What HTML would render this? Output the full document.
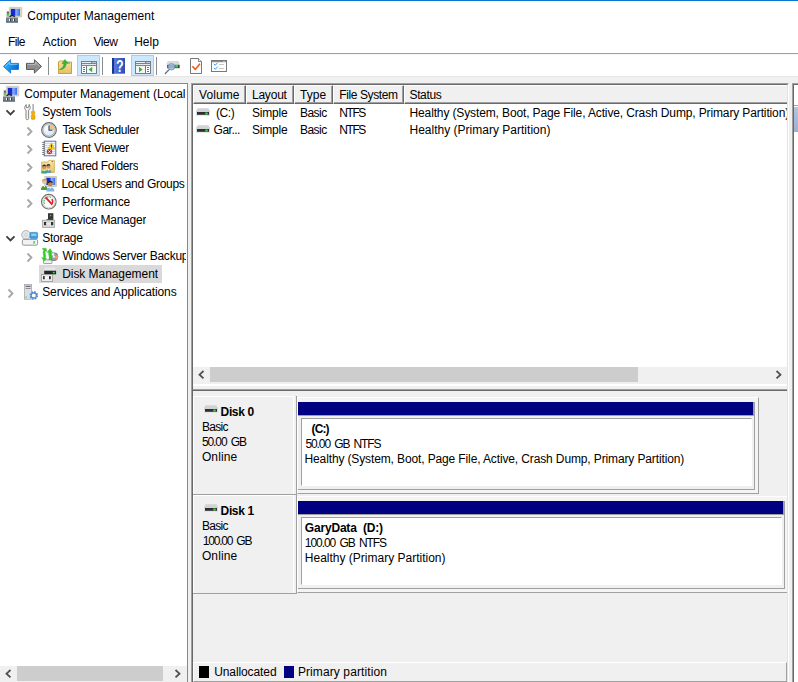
<!DOCTYPE html>
<html>
<head>
<meta charset="utf-8">
<title>Computer Management</title>
<style>
html,body{margin:0;padding:0;}
body{width:798px;height:682px;overflow:hidden;background:#fff;position:relative;
  font-family:"Liberation Sans",sans-serif;font-size:12px;color:#000;}
.a{position:absolute;}
.t{position:absolute;white-space:nowrap;line-height:18px;height:18px;}
.b{font-weight:bold;}
svg{position:absolute;overflow:visible;}
/* section: frame */
#accent{left:0;top:0;width:798px;height:1px;background:#0c76d2;}
#menuline{left:0;top:53px;width:798px;height:1px;background:#a0a0a0;}
#band{left:0;top:76px;width:798px;height:606px;background:#f0f0f0;}
/* tree pane */
#tree{left:0;top:83px;width:187px;height:599px;background:#fff;border-top:1px solid #828790;border-right:1px solid #828790;box-sizing:content-box;overflow:hidden;}
#tree .t{overflow:hidden;}
#sel{left:39px;top:181px;width:123px;height:18px;background:#d9d9d9;}
/* right pane */
#rp{left:191px;top:83px;width:596px;height:599px;border-left:1px solid #a0a0a0;border-top:1px solid #a0a0a0;border-right:1px solid #fff;overflow:hidden;}
#rpi{left:0;top:0;width:594px;height:598px;border-left:1px solid #696969;border-top:1px solid #696969;border-right:1px solid #e3e3e3;overflow:hidden;background:#f0f0f0;}
#list{left:0;top:0;width:594px;height:299px;background:#fff;overflow:hidden;}
#hdr{left:0;top:0;width:594px;height:19px;background:#f0f0f0;}
.hc{position:absolute;top:0;height:19px;box-sizing:border-box;border-left:1px solid #fff;border-top:1px solid #fff;border-right:1px solid #696969;border-bottom:1px solid #696969;box-shadow:inset -1px -1px 0 #a0a0a0;}
#hsb{left:0;top:282px;width:594px;height:17px;background:#f0f0f0;}
#hthumb{left:17px;top:0;width:428px;height:15px;background:#cdcdcd;}
#split{left:0;top:299px;width:594px;height:5px;background:#f0f0f0;border-top:1px solid #fff;box-shadow:inset 0 1px 0 #fff;box-sizing:border-box;}
#split2{left:0;top:304px;width:594px;height:2px;background:#696969;border-top:1px solid #a0a0a0;box-sizing:border-box;}
#gv{left:-1px;top:305px;width:596px;height:293px;}
.d{line-height:15px;height:15px;}
.lab{box-sizing:border-box;width:101px;height:99px;border-top:1px solid #fff;border-left:1px solid #fff;border-right:1px solid #fff;}
.lab:after{content:"";position:absolute;left:-1px;top:97px;width:104px;height:1px;background:#a0a0a0;}
.vsep{width:1px;height:99px;background:#a0a0a0;}
.pout{height:97px;box-sizing:border-box;border-top:1px solid #fff;border-left:1px solid #fff;border-right:1px solid #a0a0a0;border-bottom:1px solid #a0a0a0;background:#f4f4f4;}
.pmid{height:88px;box-sizing:border-box;border-right:1px solid #a0a0a0;border-bottom:1px solid #a0a0a0;background:#f0f0f0;}
.pbar{left:0;top:0;height:13px;background:#000080;border-bottom:1px solid #a0a0a0;border-right:1px solid #a0a0a0;}
.pin{height:68px;box-sizing:border-box;border-top:1px solid #a0a0a0;border-left:1px solid #a0a0a0;border-right:1px solid #fff;border-bottom:1px solid #fff;background:#fff;}
#legend{left:1px;top:272px;width:592px;height:18px;border-top:1px solid #fff;border-left:1px solid #fff;border-right:1px solid #a0a0a0;border-bottom:1px solid #a0a0a0;}
</style>
</head>
<body>
<div class="a" id="accent"></div>
<div class="t" id="title" style="left:27.21px;top:7px;letter-spacing:0.056px;">Computer Management</div>
<div class="t" style="left:8.1px;top:33px;letter-spacing:-0.668px;">File</div>
<div class="t" style="left:42.71px;top:33px;letter-spacing:0.08px;">Action</div>
<div class="t" style="left:93.41px;top:33px;letter-spacing:-0.399px;">View</div>
<div class="t" style="left:134.21px;top:33px;letter-spacing:0.0px;">Help</div>
<div class="a" id="menuline"></div>
<div class="a" id="band"></div>
<div class="a" style="left:0;top:76px;width:798px;height:1px;background:#e6e6e6;"></div>
<div class="a" style="left:0;top:54px;width:798px;height:1px;background:#f4f6fa;"></div>



<!-- shared icon symbols -->
<svg width="0" height="0" style="left:0;top:0;">
  <defs>
    <linearGradient id="gScr" x1="0" y1="0" x2="1" y2="0"><stop offset="0" stop-color="#1a22d0"/><stop offset="0.4" stop-color="#1030d8"/><stop offset="0.55" stop-color="#8cb0f8"/><stop offset="1" stop-color="#3c6cf0"/></linearGradient>
    <linearGradient id="gBox" x1="0" y1="0" x2="0" y2="1"><stop offset="0" stop-color="#a8b4bc"/><stop offset="0.25" stop-color="#6c7c88"/><stop offset="1" stop-color="#5c6c78"/></linearGradient>
    <radialGradient id="gClk" cx="0.4" cy="0.4" r="0.7"><stop offset="0" stop-color="#ffffff"/><stop offset="1" stop-color="#c8dcec"/></radialGradient>
    <linearGradient id="gFold" x1="0" y1="0" x2="0" y2="1"><stop offset="0" stop-color="#f8e4a4"/><stop offset="1" stop-color="#e8c468"/></linearGradient>
    <linearGradient id="gHd" x1="0" y1="0" x2="0" y2="1"><stop offset="0" stop-color="#e0e2e4"/><stop offset="1" stop-color="#b4b8bc"/></linearGradient>
    <g id="icCM">
      <rect x="0.6" y="4" width="2.8" height="6.4" fill="#b4b4b8"/>
      <rect x="1.2" y="5" width="1.6" height="1.6" fill="#484858"/>
      <rect x="0.8" y="7" width="2.4" height="1.6" fill="#30e030"/>
      <rect x="3.3" y="0.3" width="12.5" height="9.8" rx="0.8" fill="#d8d4c4" stroke="#bcb8a8" stroke-width="0.5"/>
      <rect x="4.8" y="1.9" width="9.2" height="6.9" fill="url(#gScr)"/>
      <path d="M3.6 10.2 C4.4 8.2 8 8.2 8.8 10.2" fill="none" stroke="#181818" stroke-width="1.2"/>
      <rect x="0" y="10.2" width="12" height="5.6" fill="url(#gBox)"/>
      <rect x="0.3" y="12.6" width="11.4" height="0.7" fill="#8c98a0"/>
      <rect x="3" y="11.8" width="1" height="2.4" fill="#f4f4f4"/><rect x="4" y="11.8" width="1" height="2.4" fill="#303840"/>
      <rect x="7" y="11.8" width="1" height="2.4" fill="#f4f4f4"/><rect x="8" y="11.8" width="1" height="2.4" fill="#303840"/>
    </g>
    <g id="icHD">
      <path d="M1.2 0.2 L12.8 0.2 L12.8 2 L14 2.2 L14 4 L0 4 L0 2.2 L1.2 2 Z" fill="#d0d2d6"/>
      <rect x="0" y="4" width="14" height="3.7" fill="#dcdee2"/>
      <rect x="1" y="4" width="12" height="2.8" fill="#2c2e30"/>
      <rect x="9.2" y="4.4" width="2.6" height="2" rx="0.6" fill="#28e438"/>
    </g>
  </defs>
</svg>
<svg style="left:6px;top:7px;" width="16" height="16" viewBox="0 0 16 16"><use href="#icCM"/></svg>
<!-- toolbar -->
<svg id="tb" style="left:0;top:54px;" width="240" height="24" viewBox="0 54 240 24">
  <defs>
    <linearGradient id="gB" x1="0" y1="0" x2="1" y2="0.5"><stop offset="0" stop-color="#48bcfc"/><stop offset="0.5" stop-color="#1c9cf0"/><stop offset="1" stop-color="#0868cc"/></linearGradient>
    <linearGradient id="gG" x1="0" y1="0" x2="0" y2="1"><stop offset="0" stop-color="#a8a8a8"/><stop offset="0.5" stop-color="#8c8c8c"/><stop offset="1" stop-color="#9c9c9c"/></linearGradient>
    <linearGradient id="gF" x1="0" y1="0" x2="0" y2="1"><stop offset="0" stop-color="#f6e3a0"/><stop offset="1" stop-color="#e4bf62"/></linearGradient>
    <linearGradient id="gH" x1="0" y1="0" x2="1" y2="0"><stop offset="0" stop-color="#5a80e4"/><stop offset="1" stop-color="#2c4cb8"/></linearGradient>
  </defs>
  <!-- back -->
  <path d="M3.5 66.4 L10.6 59.7 L10.6 63.4 L18.5 63.4 L18.5 69.4 L10.6 69.4 L10.6 73.1 Z" fill="url(#gB)" stroke="#1c80dc" stroke-width="1" stroke-linejoin="round"/>
  <path d="M5.2 66.4 L9.6 62.2 L9.6 64.4 L17.5 64.4" fill="none" stroke="#9cdcff" stroke-width="0.8" opacity="0.85"/>
  <!-- forward -->
  <path d="M41.5 66.4 L34.4 59.7 L34.4 63.4 L26.5 63.4 L26.5 69.4 L34.4 69.4 L34.4 73.1 Z" fill="url(#gG)" stroke="#565656" stroke-width="1" stroke-linejoin="round"/>
  <path d="M39.8 66.4 L35.4 62.2 L35.4 64.4 L27.5 64.4" fill="none" stroke="#d0d0d0" stroke-width="0.8" opacity="0.8"/>
  <rect x="48" y="57" width="1" height="18" fill="#8c8c8c"/>
  <!-- up folder -->
  <path d="M58.5 62 L58.5 73.5 L71.5 73.5 L71.5 62 L66 62 L65 61 L59.5 61 Z" fill="url(#gF)" stroke="#c8a040" stroke-width="1"/>
  <rect x="67" y="62.5" width="3" height="1.2" fill="#7aa0d0"/>
  <path d="M59.5 69.5 C62.5 68.5 64 66 64 63.5 L62 63.8 L65 59.5 L68 63.2 L66.2 63.3 C66.2 67 63.5 70 59.5 69.5 Z" fill="#3cb434" stroke="#2a9a24" stroke-width="0.5"/>
  <!-- show/hide tree (active) -->
  <rect x="77.5" y="55.5" width="22" height="20" fill="#cce8ff" stroke="#99d1ff"/>
  <g>
    <rect x="81.5" y="61.5" width="15" height="12" fill="#fff" stroke="#7c7c7c"/>
    <rect x="82" y="62" width="14" height="4" fill="#7c8494"/>
    <rect x="82" y="62" width="9" height="1" fill="#eceef2"/>
    <rect x="92.5" y="62" width="1.2" height="1" fill="#eceef2"/><rect x="94.5" y="62" width="1.2" height="1" fill="#eceef2"/>
    <rect x="82" y="64" width="14" height="1" fill="#e4e6ea"/>
    <rect x="86" y="66" width="1.2" height="7" fill="#6c7c94"/>
    <rect x="87.2" y="66" width="8.8" height="7" fill="#f6f6f6"/>
    <rect x="83" y="67" width="2" height="1" fill="#3a7cd0"/><rect x="83" y="69" width="2" height="1" fill="#3a7cd0"/><rect x="83" y="71" width="2" height="1" fill="#3a7cd0"/>
    <path d="M88.6 69.5 L92.2 66.8 L92.2 72.2 Z" fill="#3cb034"/>
  </g>
  <rect x="102" y="57" width="1" height="18" fill="#8c8c8c"/>
  <!-- help -->
  <rect x="112" y="58" width="13" height="15.7" fill="url(#gH)"/>
  <rect x="112" y="58" width="2.4" height="15.7" fill="#1c3690"/>
  <rect x="114.4" y="58" width="0.8" height="15.7" fill="#7c9cf0" opacity="0.7"/>
  <text transform="translate(119.9 71.6) scale(0.78 1)" font-family="Liberation Sans, sans-serif" font-weight="bold" font-size="16" fill="#fff" text-anchor="middle">?</text>
  <!-- show/hide action pane (active) -->
  <rect x="131.5" y="55.5" width="22" height="20" fill="#cce8ff" stroke="#99d1ff"/>
  <g>
    <rect x="135.5" y="61.5" width="15" height="12" fill="#fff" stroke="#7c7c7c"/>
    <rect x="136" y="62" width="14" height="4" fill="#7c8494"/>
    <rect x="136" y="62" width="9" height="1" fill="#eceef2"/>
    <rect x="146.5" y="62" width="1.2" height="1" fill="#eceef2"/><rect x="148.5" y="62" width="1.2" height="1" fill="#eceef2"/>
    <rect x="136" y="64" width="14" height="1" fill="#e4e6ea"/>
    <rect x="144.8" y="66" width="1.2" height="7" fill="#6c7c94"/>
    <rect x="136" y="66" width="8.8" height="7" fill="#f6f6f6"/>
    <rect x="147" y="67" width="2" height="1" fill="#3a7cd0"/><rect x="147" y="69" width="2" height="1" fill="#3a7cd0"/><rect x="147" y="71" width="2" height="1" fill="#3a7cd0"/>
    <path d="M142.6 69.5 L139 66.8 L139 72.2 Z" fill="#3cb034"/>
  </g>
  <rect x="156" y="57" width="1" height="18" fill="#8c8c8c"/>
  <!-- connect -->
  <path d="M167.8 61 L178.4 61 L179.4 63 L179.4 64.8 L166.8 64.8 L166.8 63 Z" fill="#d6dade"/>
  <rect x="166.8" y="64.8" width="13" height="4.2" fill="#dcdfe3"/>
  <rect x="167.2" y="64.8" width="12.4" height="3.2" fill="#3c4044"/>
  <rect x="175.2" y="65.1" width="2.8" height="2.5" rx="0.7" fill="#24e03c"/>
  <path d="M169.4 69.4 L165.3 73.5" stroke="#5c7088" stroke-width="1.3" stroke-linecap="round"/>
  <circle cx="171.5" cy="66.8" r="3.2" fill="#9cc0e0" fill-opacity="0.88" stroke="#7c94ac" stroke-width="0.9"/>
  <!-- properties -->
  <path d="M190.5 58.5 L198.5 58.5 L201.5 61.5 L201.5 73.5 L190.5 73.5 Z" fill="#fcfcfc" stroke="#787878" stroke-width="1"/>
  <path d="M198.5 58.5 L198.5 61.5 L201.5 61.5" fill="#f0f0f0" stroke="#787878" stroke-width="0.9"/>
  <path d="M192.4 66.2 L195.3 69.4 L200 63.8" fill="none" stroke="#ec5a1c" stroke-width="1.6"/>
  <!-- list -->
  <rect x="211.5" y="60.5" width="15" height="11" fill="#fff" stroke="#7a7a7a"/>
  <rect x="212" y="61" width="14" height="1.2" fill="#8a8a8a"/>
  <rect x="223.5" y="61" width="1" height="1" fill="#e8e8e8"/>
  <path d="M213.8 63.8 L215.2 65.3 L217.6 62.7" fill="none" stroke="#3a94e8" stroke-width="1"/>
  <path d="M213.8 67.8 L215.2 69.3 L217.6 66.7" fill="none" stroke="#3a94e8" stroke-width="1"/>
  <rect x="219" y="64" width="5" height="1" fill="#c8c8c8"/><rect x="219" y="68" width="5" height="1" fill="#c8c8c8"/>
</svg>

<div class="a" id="tree">
  <div class="a" id="sel"></div>
  <div class="t" style="left:24.21px;top:1px;width:162px;letter-spacing:-0.032px;">Computer Management (Local</div>
  <div class="t" style="left:42.2px;top:19px;letter-spacing:-0.166px;">System Tools</div>
  <div class="t" style="left:62.41px;top:37px;letter-spacing:-0.368px;">Task Scheduler</div>
  <div class="t" style="left:61.41px;top:55px;letter-spacing:-0.235px;">Event Viewer</div>
  <div class="t" style="left:61.41px;top:73px;letter-spacing:-0.368px;">Shared Folders</div>
  <div class="t" style="left:61.41px;top:91px;letter-spacing:-0.286px;">Local Users and Groups</div>
  <div class="t" style="left:62.2px;top:109px;letter-spacing:-0.06px;">Performance</div>
  <div class="t" style="left:62.2px;top:127px;letter-spacing:-0.244px;">Device Manager</div>
  <div class="t" style="left:42.2px;top:145px;letter-spacing:-0.201px;">Storage</div>
  <div class="t" style="left:62.41px;top:163px;width:123.8px;letter-spacing:-0.23px;">Windows Server Backup</div>
  <div class="t" style="left:62.2px;top:181px;letter-spacing:-0.056px;">Disk Management</div>
  <div class="t" style="left:42.2px;top:199px;letter-spacing:-0.093px;">Services and Applications</div>
</div>


<!-- tree icons (page coordinates) -->
<svg id="ticons" style="left:0;top:84px;" width="187" height="230" viewBox="0 84 187 230">
  <use href="#icCM" x="3" y="86"/>
  <!-- chevrons -->
  <path d="M6.5 110.3 L10.5 114.3 L14.5 110.3" fill="none" stroke="#404040" stroke-width="1.9"/>
  <path d="M6.5 236.3 L10.5 240.3 L14.5 236.3" fill="none" stroke="#404040" stroke-width="1.9"/>
  <g fill="none" stroke="#a6a6a6" stroke-width="1.8">
    <path d="M27.5 127.5 L31.5 131.5 L27.5 135.5"/>
    <path d="M27.5 145.5 L31.5 149.5 L27.5 153.5"/>
    <path d="M27.5 163.5 L31.5 167.5 L27.5 171.5"/>
    <path d="M27.5 181.5 L31.5 185.5 L27.5 189.5"/>
    <path d="M27.5 199.5 L31.5 203.5 L27.5 207.5"/>
    <path d="M27.5 253.5 L31.5 257.5 L27.5 261.5"/>
    <path d="M8.5 289.5 L12.5 293.5 L8.5 297.5"/>
  </g>
  <!-- System Tools -->
  <path d="M25.2 106.2 C24.2 107.5 24.6 109.6 26 110.2 L26 118.6 C26 120 28.6 120 28.6 118.6 L28.6 110.2 C30.2 109.6 30.8 107.6 29.8 106 L29.2 104.4 L28.6 107.4 L26.4 107.6 L26.2 104.6 Z" fill="#f4f4f4" stroke="#787878" stroke-width="0.9"/>
  <rect x="32.6" y="104" width="1" height="7.4" fill="#808080"/>
  <path d="M31.3 111.4 L34.9 111.4 L34.9 113.6 L34.3 114.4 L35 115.4 L35 119 Q33.1 120.2 31.2 119 L31.2 115.4 L31.9 114.4 L31.3 113.6 Z" fill="#f4ac08" stroke="#c88400" stroke-width="0.4"/>
  <!-- Task Scheduler -->
  <circle cx="49" cy="130" r="7.3" fill="url(#gClk)" stroke="#6a6a6a" stroke-width="1.2"/>
  <circle cx="49" cy="130" r="6.1" fill="none" stroke="#b4b8bc" stroke-width="1.2"/>
  <path d="M49 130 L49 124.3 A5.7 5.7 0 0 1 54.7 130 Z" fill="#e8c880"/>
  <path d="M49 125.6 L49 130.2 L52.4 130.2" fill="none" stroke="#2c4878" stroke-width="1.1"/>
  <!-- Event Viewer -->
  <rect x="44.2" y="141.2" width="11.6" height="14.6" fill="#f4f6fc" stroke="#5870b0" stroke-width="1"/>
  <g stroke="#c4d0ec" stroke-width="0.8"><path d="M45 143.5H55M45 145.5H55M45 147.5H55M45 149.5H55M45 151.5H55M45 153.5H55"/></g>
  <g stroke="#707070" stroke-width="0.9"><path d="M42.2 142.5H44.6M42.2 144.5H44.6M42.2 146.5H44.6M42.2 148.5H44.6M42.2 150.5H44.6M42.2 152.5H44.6M42.2 154.5H44.6"/></g>
  <path d="M51.4 142.8 L54.6 148.8 L48.2 148.8 Z" fill="#f4d414" stroke="#d0a800" stroke-width="0.5"/>
  <rect x="51" y="144.6" width="0.9" height="2.4" fill="#303030"/><rect x="51" y="147.5" width="0.9" height="0.8" fill="#303030"/>
  <circle cx="49.5" cy="151.6" r="2.7" fill="#e02424"/>
  <path d="M48.4 150.5 L50.6 152.7 M50.6 150.5 L48.4 152.7" stroke="#fff" stroke-width="0.9"/>
  <!-- Shared Folders -->
  <path d="M41.6 162 L47.8 162 L48.8 160.4 L54.4 160.4 L54.4 172.4 L41.6 172.4 Z" fill="url(#gFold)" stroke="#d4ac50" stroke-width="0.8"/>
  <rect x="49.4" y="161" width="3.8" height="1.2" fill="#fff"/><rect x="51.4" y="161" width="1.8" height="1.2" fill="#4a90e0"/>
  <circle cx="44.2" cy="167.2" r="2" fill="#c89870"/><path d="M42.2 166.8 A2 2 0 0 1 46.2 166.4 L44.4 166 Z" fill="#3c2c20"/>
  <path d="M41.2 173.4 C41.2 169.4 47.2 169.4 47.2 173.4 Z" fill="#34a85c"/>
  <circle cx="48.4" cy="166.6" r="2" fill="#c89870"/><path d="M46.4 166.2 A2 2 0 0 1 50.4 165.8 L48.6 165.4 Z" fill="#3c2c20"/>
  <path d="M45.6 172.8 C45.6 168.8 51.4 168.8 51.4 172.8 Z" fill="#3c9cd0"/>
  <path d="M43.2 170.2 L44.2 171.6 L45.2 170.2 Z" fill="#fff"/><path d="M47.5 169.6 L48.5 171 L49.5 169.6 Z" fill="#fff"/>
  <!-- Local Users and Groups -->
  <rect x="44.8" y="176.3" width="11.8" height="10.4" fill="#d8d4c4" stroke="#bcb8a8" stroke-width="0.5"/>
  <rect x="46.4" y="177.8" width="8.8" height="7.2" fill="url(#gScr)"/>
  <circle cx="44.4" cy="181.8" r="2.4" fill="#e4c49c"/><path d="M42 181.6 A2.4 2.4 0 0 1 46.8 181 L44.4 180.2 Z" fill="#c8a040"/>
  <path d="M40.8 190 C40.8 184.2 47.8 184.2 47.8 190 Z" fill="#4c9c3c"/>
  <path d="M43.4 185.4 L44.4 187.4 L45.4 185.4 Z" fill="#fff"/>
  <circle cx="50.2" cy="183.8" r="2.5" fill="#b88458"/><path d="M47.7 183.6 A2.5 2.5 0 0 1 52.7 183 L50.2 182.2 Z" fill="#302018"/>
  <path d="M46.4 191.4 C46.4 185.8 54.4 185.8 54.4 191.4 Z" fill="#7cb4e4"/>
  <path d="M49.2 187.2 L50.2 189.2 L51.2 187.2 Z" fill="#fff"/>
  <!-- Performance -->
  <circle cx="48.8" cy="201.7" r="7.3" fill="#fff" stroke="#707070" stroke-width="1.1"/>
  <circle cx="48.8" cy="201.7" r="6.2" fill="none" stroke="#c8c8c8" stroke-width="0.9"/>
  <path d="M44.6 204 A4.8 4.8 0 0 1 51.4 197.6" fill="none" stroke="#4c9c4c" stroke-width="1.2" stroke-dasharray="0.9 0.7"/>
  <path d="M52.4 198.6 A4.8 4.8 0 0 1 51.6 205.4 L50.6 204 A3 3 0 0 0 51.2 199.8 Z" fill="#e01c24"/>
  <path d="M45.6 197.4 L51.4 203.6" stroke="#e01c24" stroke-width="1.8"/>
  <!-- Device Manager -->
  <rect x="48" y="213.2" width="5.4" height="6.8" fill="#383838"/>
  <rect x="50" y="215" width="1.2" height="1.2" fill="#30e840"/>
  <rect x="46.6" y="219" width="2" height="1" fill="#585858"/>
  <rect x="42.3" y="220.2" width="12.4" height="7.2" fill="#d8d8d8" stroke="#989898" stroke-width="0.7"/>
  <rect x="44" y="222" width="2.2" height="3.2" fill="#303030"/><rect x="51" y="222" width="2.2" height="3.2" fill="#303030"/>
  <rect x="46.2" y="223" width="4.8" height="1.6" fill="#ececec"/>
  <!-- Storage -->
  <circle cx="26" cy="234.8" r="4.3" fill="#e4e6e8" stroke="#a0a4a8" stroke-width="0.8"/>
  <circle cx="26" cy="234.8" r="1.2" fill="#fff" stroke="#a0a4a8" stroke-width="0.5"/>
  <rect x="30" y="232.4" width="7.6" height="6.2" rx="1" fill="#3c9cdc" stroke="#2878b8" stroke-width="0.6"/>
  <rect x="31.2" y="233.6" width="5.2" height="2.4" fill="#8cd0f4"/>
  <rect x="22.4" y="239.4" width="15.2" height="5.8" rx="1.4" fill="#f0f2f4" stroke="#888c90" stroke-width="0.9"/>
  <rect x="33.4" y="241.2" width="1.4" height="2.4" fill="#38c838"/>
  <!-- Windows Server Backup -->
  <rect x="43.4" y="259.8" width="8.6" height="3.8" rx="0.8" fill="#f0f2f4" stroke="#80848c" stroke-width="0.8"/>
  <circle cx="54" cy="256.7" r="3.9" fill="#9ca0a8" stroke="#686c74" stroke-width="0.8"/>
  <path d="M54 256.7 L57.6 255 A3.9 3.9 0 0 1 56.6 259.6 Z" fill="#e8a078"/>
  <path d="M54 256.7 L51 254.2 A3.9 3.9 0 0 1 54.4 252.8 Z" fill="#e4e8f0"/>
  <circle cx="54" cy="256.7" r="1" fill="#f4f4f4"/>
  <path d="M42.2 248.4 L43.8 250.4 C42 253 44.4 255 43.2 258 L41.6 257.6 L44 261 L46.6 258.4 L45.2 258.2 C46.6 255 44.2 253.2 45.6 250.8 L46.8 251.6 L46 248.2 Z" fill="#34d024" stroke="#28a81c" stroke-width="0.35"/>
  <path d="M50 248.6 L47.2 252.4 L48.8 252.2 C48 254.6 50 256.4 48.8 259.6 L51.2 260 C52.2 256.8 50.4 254.8 51.2 252.2 L52.8 252.8 Z" fill="#34d024" stroke="#28a81c" stroke-width="0.35"/>
  <!-- Disk Management -->
  <path d="M45.2 267.4 L54.8 267.4 L56 270.7 L44.2 270.7 Z" fill="#e6e8ec"/>
  <rect x="44.2" y="270.7" width="11.9" height="3.6" fill="#242628"/>
  <rect x="52.8" y="271.8" width="1.9" height="1.5" fill="#30e840"/>
  <rect x="41.3" y="274.6" width="11.4" height="6.9" fill="#ececec" stroke="#8c8c8c" stroke-width="0.7"/>
  <rect x="43" y="276.2" width="1.8" height="3" fill="#282828"/><rect x="49" y="276.2" width="1.8" height="3" fill="#282828"/>
  <rect x="44.8" y="277" width="4.2" height="1.6" fill="#fafafa"/>
  <!-- Services and Applications -->
  <rect x="24.6" y="284.4" width="7" height="14.8" fill="#dcdfe2" stroke="#9ca0a4" stroke-width="0.7"/>
  <rect x="25.6" y="285.8" width="5" height="1" fill="#50545c"/><rect x="25.6" y="288" width="5" height="1" fill="#8c9098"/>
  <rect x="25.4" y="296.6" width="1.4" height="1" fill="#38c838"/>
  <circle cx="33.8" cy="295.4" r="3.2" fill="#fff" stroke="#4c8cd0" stroke-width="2.2" stroke-dasharray="1.5 1.0"/>
  <circle cx="33.8" cy="295.4" r="2.6" fill="none" stroke="#4c8cd0" stroke-width="1.2"/>
</svg>

<div class="a" id="rp"><div class="a" id="rpi">
  <!-- upper list -->
  <div class="a" id="list">
    <div class="a" id="hdr">
      <div class="hc" style="left:0;width:53px;"></div>
      <div class="hc" style="left:53px;width:48px;"></div>
      <div class="hc" style="left:101px;width:39px;"></div>
      <div class="hc" style="left:140px;width:71px;"></div>
      <div class="hc" style="left:211px;width:400px;"></div>
    </div>
    <div class="t" style="left:6.1px;top:1px;letter-spacing:0.08px;">Volume</div>
    <div class="t" style="left:58.91px;top:1px;letter-spacing:-0.2px;">Layout</div>
    <div class="t" style="left:107.1px;top:1px;letter-spacing:-0.001px;">Type</div>
    <div class="t" style="left:146.21px;top:1px;letter-spacing:-0.38px;">File System</div>
    <div class="t" style="left:216.5px;top:1px;letter-spacing:-0.36px;">Status</div>
    <div class="t" style="left:22.9px;top:19px;letter-spacing:-0.366px;">(C:)</div>
    <div class="t" style="left:20.6px;top:36px;letter-spacing:-0.52px;">Gar...</div>
    <div class="t" style="left:58.91px;top:19px;letter-spacing:-0.2px;">Simple</div>
    <div class="t" style="left:58.91px;top:36px;letter-spacing:-0.2px;">Simple</div>
    <div class="t" style="left:107.0px;top:19px;letter-spacing:-0.55px;">Basic</div>
    <div class="t" style="left:107.0px;top:36px;letter-spacing:-0.55px;">Basic</div>
    <div class="t" style="left:146.21px;top:19px;letter-spacing:-1.402px;">NTFS</div>
    <div class="t" style="left:146.21px;top:36px;letter-spacing:-1.402px;">NTFS</div>
    <div class="t" style="left:216.5px;top:19px;letter-spacing:-0.128px;">Healthy (System, Boot, Page File, Active, Crash Dump, Primary Partition)</div>
    <div class="t" style="left:216.5px;top:36px;letter-spacing:0.008px;">Healthy (Primary Partition)</div>
    <div class="a" id="hsb"><div class="a" id="hthumb"></div></div>
  </div>
  <div class="a" id="split"></div><div class="a" id="split2"></div>
  <!-- lower graphical view -->
  <div class="a" id="gv">
    <div class="a lab" style="left:1px;top:6px;"></div>
    <div class="a vsep" style="left:104px;top:6px;"></div>
    <div class="t b d" style="left:28.6px;top:15px;letter-spacing:-0.36px;">Disk 0</div>
    <div class="t d" style="left:9.91px;top:30px;letter-spacing:-0.7px;">Basic</div>
    <div class="t d" style="left:9.91px;top:45px;letter-spacing:-1.086px;word-spacing:2px;">50.00 GB</div>
    <div class="t d" style="left:9.91px;top:60px;letter-spacing:0.12px;">Online</div>
    <div class="a pout" style="left:105px;top:7px;width:462px;"></div>
    <div class="a pmid" style="left:106px;top:12px;width:457px;"><div class="a pbar" style="width:455px"></div></div>
    <div class="a pin" style="left:109px;top:28px;width:451px;"></div>
    <div class="t b d" style="left:119.5px;top:32px;letter-spacing:-0.866px;">(C:)</div>
    <div class="t d" style="left:113.5px;top:47px;letter-spacing:-1.117px;word-spacing:2px;">50.00 GB NTFS</div>
    <div class="t d" style="left:112.5px;top:62px;letter-spacing:-0.127px;">Healthy (System, Boot, Page File, Active, Crash Dump, Primary Partition)</div>

    <div class="a lab" style="left:1px;top:105px;"></div>
    <div class="a vsep" style="left:104px;top:105px;"></div>
    <div class="t b d" style="left:28.6px;top:114px;letter-spacing:-0.36px;">Disk 1</div>
    <div class="t d" style="left:9.91px;top:129px;letter-spacing:-0.7px;">Basic</div>
    <div class="t d" style="left:10.81px;top:144px;letter-spacing:-1.221px;word-spacing:2px;">100.00 GB</div>
    <div class="t d" style="left:9.91px;top:159px;letter-spacing:0.12px;">Online</div>
    <div class="a pout" style="left:105px;top:106px;width:492px;"></div>
    <div class="a pmid" style="left:106px;top:111px;width:487px;"><div class="a pbar" style="width:485px"></div></div>
    <div class="a pin" style="left:109px;top:127px;width:481px;"></div>
    <div class="t b d" style="left:112.81px;top:131px;letter-spacing:-0.187px;">GaryData&nbsp; (D:)</div>
    <div class="t d" style="left:112.81px;top:146px;letter-spacing:-1.06px;word-spacing:2px;">100.00 GB NTFS</div>
    <div class="t d" style="left:112.81px;top:161px;letter-spacing:-0.0px;">Healthy (Primary Partition)</div>

    <div class="a" id="legend">
      <div class="a" style="left:5px;top:3px;width:10px;height:12px;background:#000;"></div>
      <div class="t" style="left:20.21px;top:0px;letter-spacing:-0.1px;">Unallocated</div>
      <div class="a" style="left:90px;top:3px;width:10px;height:12px;background:#000080;"></div>
      <div class="t" style="left:103.91px;top:0px;letter-spacing:0.1px;">Primary partition</div>
    </div>
  </div>
</div></div>

<!-- tree scrollbar -->
<div class="a" style="left:0;top:666px;width:187px;height:17px;background:#f0f0f0;z-index:0;"><div class="a" style="left:17px;top:0;width:146px;height:15px;background:#cdcdcd;"></div></div>
<!-- disk icons, scroll arrows -->
<svg style="left:0;top:0;" width="798" height="682" viewBox="0 0 798 682">
  <use href="#icHD" x="196" y="108"/>
  <use href="#icHD" x="196" y="125"/>
  <use href="#icHD" x="204" y="405"/>
  <use href="#icHD" x="204" y="504"/>
  <g fill="none" stroke="#505050" stroke-width="1.8">
    <path d="M203.5 371 L199.5 374.7 L203.5 378.4"/>
    <path d="M776.5 371 L780.5 374.7 L776.5 378.4"/>
    <path d="M10.5 670 L6.5 673.7 L10.5 677.4"/>
    <path d="M175.5 670 L179.5 673.7 L175.5 677.4"/>
  </g>
</svg>
<!-- actions pane sliver -->
<div class="a" style="left:792px;top:83px;width:6px;height:599px;background:#fff;border-left:1px solid #a0a0a0;border-top:1px solid #a0a0a0;box-sizing:border-box;">
  <div class="a" style="left:0;top:0;width:5px;height:598px;border-left:1px solid #696969;border-top:1px solid #696969;box-sizing:border-box;"></div>
  <div class="a" style="left:1px;top:21px;width:4px;height:1px;background:#a0a0a0;"></div>
  <div class="a" style="left:1px;top:23px;width:4px;height:25px;background:linear-gradient(#b4c4e0,#9cb0d0);"></div>
</div>
</body>
</html>
